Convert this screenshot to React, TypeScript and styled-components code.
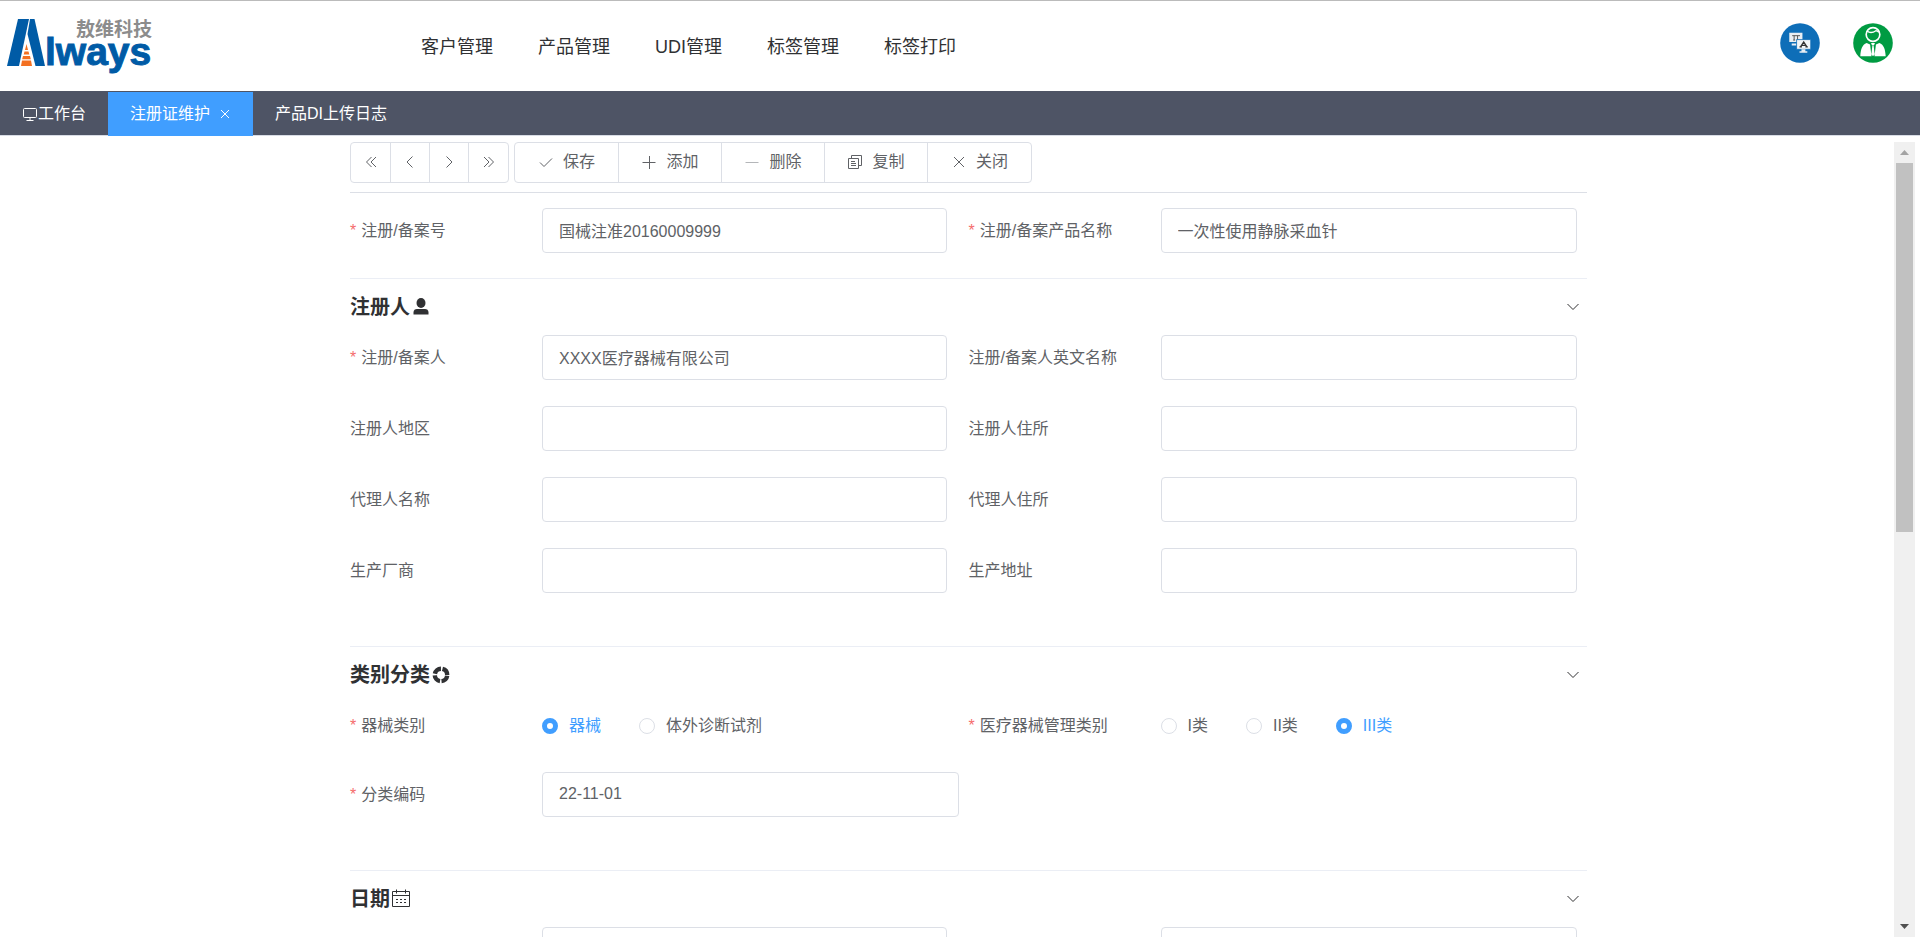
import React, { useState } from "react";
import styled, { createGlobalStyle } from "styled-components";

const GlobalStyle = createGlobalStyle`
  *, *::before, *::after { box-sizing: border-box; }
  body {
    margin: 0;
    background: #fff;
    color: #606266;
    font-family: "Liberation Sans", "Noto Sans CJK SC", sans-serif;
    font-size: 16px;
    line-height: 24px;
  }
  button, input { font: inherit; color: inherit; }
`;

const Page = styled.div`
  display: flex;
  flex-direction: column;
  height: 100vh;
`;

const Header = styled.header`
  display: flex;
  align-items: center;
  height: 91px;
  flex: none;
  border-top: 1px solid #bbb;
`;

const Brand = styled.a`
  display: block;
  width: 421px;
  height: 90px;
  flex: none;
  svg { display: block; }
`;

const Nav = styled.nav`
  display: flex;
  flex: 1;
  gap: 45px;
  padding-top: 2px;
`;

const NavLink = styled.a`
  color: #303133;
  font-size: 18px;
  text-decoration: none;
`;

const HeaderActions = styled.div`
  display: flex;
  gap: 33px;
  padding: 0 27px 6px 0;
`;

const RoundButton = styled.button`
  width: 40px;
  height: 40px;
  padding: 0;
  border: 0;
  background: none;
  svg { display: block; }
`;

const TabBar = styled.div`
  display: flex;
  flex: none;
  height: 45px;
  background: #4e5465;
  border-bottom: 1px solid #d8dce5;
`;

const Tab = styled.button<{ $active?: boolean }>`
  display: flex;
  align-items: center;
  height: 44px;
  margin-top: 1px;
  padding: 0 22px;
  border: 0;
  color: #fff;
  background: ${(p) => (p.$active ? "#409eff" : "transparent")};
`;

const CloseIcon = styled.svg`
  margin-left: 10px;
`;

const Main = styled.main`
  display: flex;
  flex: 1;
  min-height: 0;
  padding: 6px 5px 5px 0;
`;

const Viewport = styled.div`
  display: grid;
  grid-template-columns: 350fr 1237fr 307fr;
  flex: 1;
  overflow: hidden;
`;

const Form = styled.form`
  grid-column: 2;
  min-width: 0;
`;

const Toolbar = styled.div`
  display: flex;
  gap: 5px;
  padding-bottom: 9px;
  border-bottom: 1px solid #dcdfe6;
`;

const ButtonGroup = styled.div`
  display: flex;
  border: 1px solid #dcdfe6;
  border-radius: 4px;
`;

const ToolButton = styled.button<{ $compact?: boolean }>`
  display: flex;
  align-items: center;
  justify-content: center;
  gap: 9px;
  width: ${(p) => (p.$compact ? 39 : 103)}px;
  height: 39px;
  padding: 0 0 2px;
  border: 0;
  background: none;
  & + & {
    border-left: 1px solid #dcdfe6;
  }
  &:last-child {
    width: ${(p) => (p.$compact ? 40 : 104)}px;
  }
`;

const Fields = styled.div<{ $lead?: boolean }>`
  display: grid;
  grid-template-columns: 1fr 1fr;
  row-gap: 26px;
  padding: ${(p) => (p.$lead ? "15px 0 25px" : "0 0 53px")};
`;

const Item = styled.div<{ $inset: number; $short?: boolean }>`
  display: flex;
  align-items: center;
  height: ${(p) => (p.$short ? 43 : 45)}px;
  padding-top: ${(p) => (p.$short ? 3 : 0)}px;
  padding-right: ${(p) => p.$inset}px;
`;

const Label = styled.label`
  width: 192px;
  flex: none;
`;

const Required = styled.span`
  margin-right: 5px;
  color: #f56c6c;
`;

const TextInput = styled.input`
  flex: 1;
  min-width: 0;
  height: 45px;
  padding: 0 16px 2px;
  border: 1px solid #dcdfe6;
  border-radius: 4px;
  background: #fff;
  outline: none;
`;

const RadioGroup = styled.div`
  display: flex;
  gap: 38px;
`;

const RadioLabel = styled.label`
  display: flex;
  align-items: center;
  gap: 11px;
  &:has(input:checked) { color: #409eff; }
`;

const Radio = styled.input`
  appearance: none;
  width: 16px;
  height: 16px;
  margin: 0;
  border: 1px solid #dcdfe6;
  border-radius: 50%;
  background: #fff;
  &:checked {
    border: 5px solid #409eff;
  }
`;

const Section = styled.section`
  border-top: 1px solid #ebeef5;
`;

const SectionHeader = styled.button`
  display: flex;
  align-items: center;
  width: 100%;
  height: 56px;
  padding: 0 8px 0 0;
  border: 0;
  background: none;
  color: #303133;
`;

const SectionTitle = styled.span`
  font-size: 20px;
  font-weight: 700;
`;

const Chevron = styled.svg`
  margin-left: auto;
`;

const ScrollBar = styled.div`
  display: flex;
  flex-direction: column;
  width: 21px;
  flex: none;
  background: #f0f0f0;
`;

const ScrollArrow = styled.button`
  display: flex;
  align-items: center;
  justify-content: center;
  height: 21px;
  padding: 0;
  border: 0;
  background: none;
`;

const ScrollTrack = styled.div`
  flex: 1;
  padding: 0 2px;
`;

const ScrollThumb = styled.div`
  height: 49%;
  background: #c1c1c1;
`;

const Logo = () => (
  <svg width="160" height="90" viewBox="0 1 160 90" aria-label="Always 敖维科技">
    <path d="M18 19H29L19 66H7z" fill="#005ba6" />
    <path d="M30 19H34.500L45 66H35.500L27.500 34z" fill="#005ba6" />
    <path d="M26.500 44l1.500 6h-3zM24.500 51.500h4l.8 3h-5.600zM23 56h7l.8 3.200h-8.600zM22 60.600h9l1 5.400h-11z" fill="#f37021" />
    <text x="45" y="65" fill="#005ba6" stroke="#005ba6" fontFamily="'Liberation Sans', sans-serif" fontWeight="700" fontSize="39">lways</text>
    <text x="76" y="36" fill="#8c8c8c" fontFamily="'Noto Sans CJK SC', sans-serif" fontWeight="700" fontSize="19">敖维科技</text>
  </svg>
);

const ScreensIcon = () => (
  <svg width="40" height="40" viewBox="0 0 41 41">
    <circle cx="20.500" cy="20.500" r="20.300" fill="#0e6eb8" />
    <path d="M9.500 10H23v9.500H9.500zM12 21h5v2h-5z" fill="#e9eef3" />
    <path d="M12.500 13h8M14.500 13v4.500M13.500 17.500h2M18 13v4.500M17 17.500h3" stroke="#555" fill="none" />
    <path d="M17 17h14.500v10H17z" fill="#f4f6f8" stroke="#0e6eb8" strokeWidth=".8" />
    <path d="M21 24.500l3.300-5 3.300 5M20 24.500h2.500M26 24.500h2.500M22.500 23h3.500" fill="none" stroke="#333" strokeWidth="1.300" />
    <path d="M22 27h4v2h2v1.500h-8V29h2z" fill="#e9eef3" />
  </svg>
);

const PersonIcon = () => (
  <svg width="40" height="40" viewBox="0 0 41 41">
    <circle cx="20.500" cy="20.500" r="20.300" fill="#009b42" />
    <circle cx="20.500" cy="11.800" r="7" fill="none" stroke="#fff" strokeWidth="1.700" />
    <path d="M14.500 8.500c3 2 6 1.500 9-.5 1 0 2 .5 3 1.500" fill="none" stroke="#fff" strokeWidth="1.400" />
    <path d="M14 20.500l3.500 1.500 1.500 12H7.500c.3-6.500 1.800-12 6.500-13.500zM27 20.500L23.500 22 22 34h11.500c-.3-6.500-1.800-12-6.500-13.500zM18.500 20.500h4l-1 2.500h-2zM19.800 23.500h1.400l1 8.500-1.700 2-1.700-2z" fill="#fff" />
  </svg>
);

const MonitorIcon = () => (
  <svg width="16" height="16" viewBox="0 0 16 16" fill="none" stroke="#fff">
    <path d="M2.500 2.500h11a1 1 0 0 1 1 1v7a1 1 0 0 1-1 1h-11a1 1 0 0 1-1-1v-7a1 1 0 0 1 1-1zM8 11.500v3M4.500 14.500h7" />
  </svg>
);

const strokes = {
  first: "M8.500 3l-5 5 5 5M13 3L8 8l5 5",
  prev: "M10.500 2.500L5 8l5.500 5.500",
  next: "M5.500 2.500L11 8l-5.500 5.500",
  last: "M7.500 3l5 5-5 5M3 3l5 5-5 5",
  save: "M2 8.500l4 4 8-8",
  add: "M1.500 8.500h13M8.500 2v13",
  remove: "M1.500 8.500h13",
  copy: "M1.500 4.500h10v10h-10zM4.500 4V1.500h10v10H12M4 7.500h4M4 9.500h5M4 11.500h5",
  close: "M3 3l10 10M13 3L3 13",
};

const ToolIcon = ({ name }: { name: keyof typeof strokes }) => (
  <svg width="16" height="16" viewBox="0 0 16 16" fill="none" stroke={name === "remove" ? "#b4b6b9" : "#606266"}>
    <path d={strokes[name]} />
  </svg>
);

const UserIcon = () => (
  <svg width="20" height="20" viewBox="0 0 20 20" fill="#303133">
    <ellipse cx="11" cy="6" rx="4.500" ry="5" />
    <path d="M3.500 17.500v-2c0-2.500 1.500-3.500 3.500-3.500h8c2 0 3.500 1 3.500 3.500v2z" />
  </svg>
);

const RingIcon = () => (
  <svg width="20" height="20" viewBox="0 0 20 20" fill="none">
    <circle cx="11" cy="10" r="6.200" stroke="#303133" strokeWidth="4.400" strokeDasharray="8.140 1.600" strokeDashoffset="-.8" />
  </svg>
);

const CalendarIcon = () => (
  <svg width="20" height="20" viewBox="0 0 20 20" fill="none" stroke="#303133">
    <path d="M2.500 2.500h17v15h-17zM2.500 6.500h17M6.500 .5v4M15.500 .5v4" />
    <path d="M6 10.500h2M10 10.500h2M14 10.500h2M6 13.500h2M10 13.500h2M14 13.500h2" />
  </svg>
);

type FieldProps = { id: string; label?: string; value?: string; required?: boolean; inset: number };

const Field = ({ id, label, value = "", required, inset }: FieldProps) => (
  <Item $inset={inset}>
    <Label htmlFor={id}>
      {required && <Required>*</Required>}
      {label}
    </Label>
    <TextInput id={id} type="text" defaultValue={value} />
  </Item>
);

type RadioFieldProps = { name: string; label: string; options: string[]; initial: string };

const RadioField = ({ name, label, options, initial }: RadioFieldProps) => (
  <Item $inset={10} $short role="radiogroup" aria-labelledby={name}>
    <Label as="span" id={name}>
      <Required>*</Required>
      {label}
    </Label>
    <RadioGroup>
      {options.map((option) => (
        <RadioLabel key={option}>
          <Radio type="radio" name={name} defaultChecked={option === initial} />
          {option}
        </RadioLabel>
      ))}
    </RadioGroup>
  </Item>
);

type PanelProps = { title: string; icon: React.ReactNode; children: React.ReactNode };

const Panel = ({ title, icon, children }: PanelProps) => {
  const [open, setOpen] = useState(true);
  return (
    <Section>
      <SectionHeader type="button" aria-expanded={open} onClick={() => setOpen(!open)}>
        <SectionTitle>{title}</SectionTitle>
        {icon}
        <Chevron width="12" height="8" viewBox="0 0 12 8" fill="none" stroke="#303133">
          <path d="M.5 1L6 6.500 11.500 1" />
        </Chevron>
      </SectionHeader>
      {open && <Fields>{children}</Fields>}
    </Section>
  );
};

const LEFT = 22;
const RIGHT = 10;

export default function App() {
  return (
    <>
      <GlobalStyle />
      <Page>
        <Header>
          <Brand href="#"><Logo /></Brand>
          <Nav>
            {["客户管理", "产品管理", "UDI管理", "标签管理", "标签打印"].map((text) => (
              <NavLink key={text} href="#">{text}</NavLink>
            ))}
          </Nav>
          <HeaderActions>
            <RoundButton aria-label="切换"><ScreensIcon /></RoundButton>
            <RoundButton aria-label="用户"><PersonIcon /></RoundButton>
          </HeaderActions>
        </Header>
        <TabBar>
          <Tab><MonitorIcon />工作台</Tab>
          <Tab $active>
            注册证维护
            <CloseIcon width="11" height="10" viewBox="0 0 11 10" stroke="#fff">
              <path d="M1 1l8 8M9 1L1 9" />
            </CloseIcon>
          </Tab>
          <Tab>产品DI上传日志</Tab>
        </TabBar>
        <Main>
          <Viewport>
            <Form onSubmit={(e) => e.preventDefault()}>
              <Toolbar>
                <ButtonGroup>
                  <ToolButton type="button" $compact aria-label="首条"><ToolIcon name="first" /></ToolButton>
                  <ToolButton type="button" $compact aria-label="上一条"><ToolIcon name="prev" /></ToolButton>
                  <ToolButton type="button" $compact aria-label="下一条"><ToolIcon name="next" /></ToolButton>
                  <ToolButton type="button" $compact aria-label="末条"><ToolIcon name="last" /></ToolButton>
                </ButtonGroup>
                <ButtonGroup>
                  <ToolButton type="button"><ToolIcon name="save" />保存</ToolButton>
                  <ToolButton type="button"><ToolIcon name="add" />添加</ToolButton>
                  <ToolButton type="button"><ToolIcon name="remove" />删除</ToolButton>
                  <ToolButton type="button"><ToolIcon name="copy" />复制</ToolButton>
                  <ToolButton type="button"><ToolIcon name="close" />关闭</ToolButton>
                </ButtonGroup>
              </Toolbar>
              <Fields $lead>
                <Field id="reg-no" label="注册/备案号" value="国械注准20160009999" required inset={LEFT} />
                <Field id="reg-product" label="注册/备案产品名称" value="一次性使用静脉采血针" required inset={RIGHT} />
              </Fields>
              <Panel title="注册人" icon={<UserIcon />}>
                <Field id="holder" label="注册/备案人" value="XXXX医疗器械有限公司" required inset={LEFT} />
                <Field id="holder-en" label="注册/备案人英文名称" inset={RIGHT} />
                <Field id="holder-region" label="注册人地区" inset={LEFT} />
                <Field id="holder-address" label="注册人住所" inset={RIGHT} />
                <Field id="agent" label="代理人名称" inset={LEFT} />
                <Field id="agent-address" label="代理人住所" inset={RIGHT} />
                <Field id="maker" label="生产厂商" inset={LEFT} />
                <Field id="maker-address" label="生产地址" inset={RIGHT} />
              </Panel>
              <Panel title="类别分类" icon={<RingIcon />}>
                <RadioField name="device-type" label="器械类别" options={["器械", "体外诊断试剂"]} initial="器械" />
                <RadioField name="device-class" label="医疗器械管理类别" options={["I类", "II类", "III类"]} initial="III类" />
                <Field id="class-code" label="分类编码" value="22-11-01" required inset={RIGHT} />
              </Panel>
              <Panel title="日期" icon={<CalendarIcon />}>
                <Field id="date-from" inset={LEFT} />
                <Field id="date-to" inset={RIGHT} />
              </Panel>
            </Form>
          </Viewport>
          <ScrollBar>
            <ScrollArrow aria-label="向上滚动">
              <svg width="9" height="5" viewBox="0 0 9 5"><path d="M4.500 0L9 5H0z" fill="#a3a3a3" /></svg>
            </ScrollArrow>
            <ScrollTrack><ScrollThumb /></ScrollTrack>
            <ScrollArrow aria-label="向下滚动">
              <svg width="9" height="5" viewBox="0 0 9 5"><path d="M4.500 5L9 0H0z" fill="#505050" /></svg>
            </ScrollArrow>
          </ScrollBar>
        </Main>
      </Page>
    </>
  );
}
